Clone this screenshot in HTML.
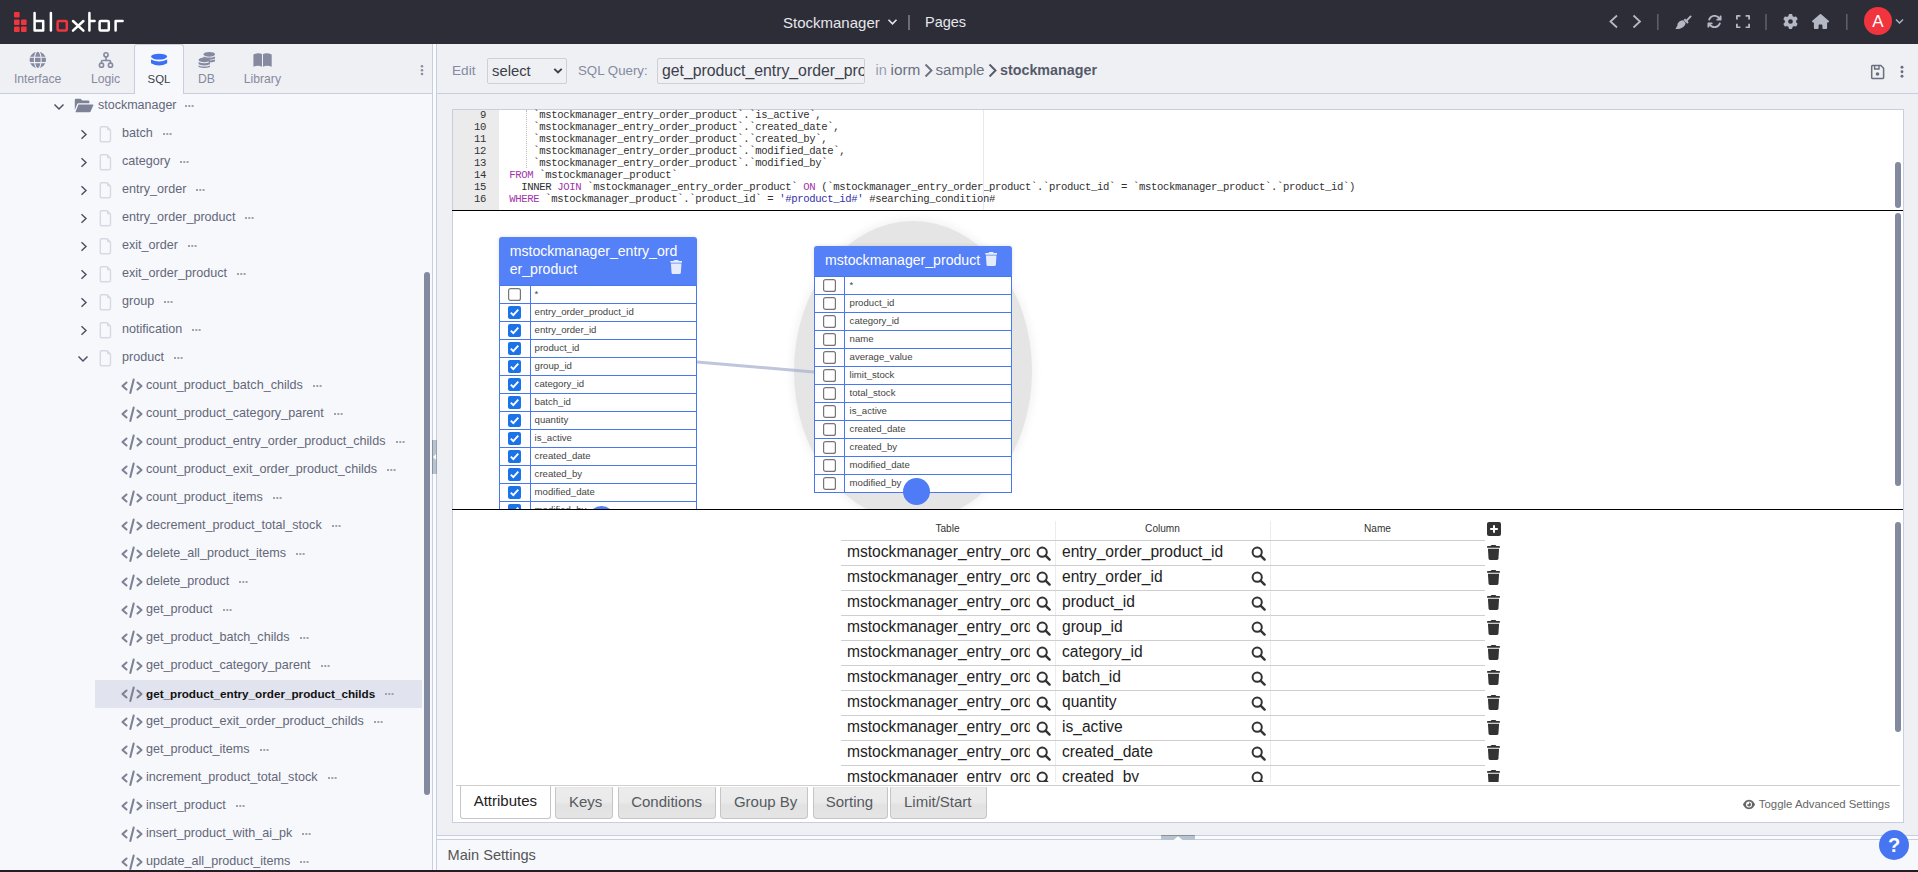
<!DOCTYPE html>
<html><head><meta charset="utf-8">
<style>
*{box-sizing:border-box;margin:0;padding:0}
html,body{width:1918px;height:872px;overflow:hidden;background:#eff0f4;font-family:"Liberation Sans",sans-serif;}
.abs{position:absolute}
.t{position:absolute;white-space:pre;line-height:1}
</style></head><body>

<div class="abs" style="left:0;top:0;width:1918px;height:44px;background:#2d2d37"></div>
<svg class="abs" style="left:0;top:0" width="140" height="44" viewBox="0 0 140 44">
<g fill="#f0353f">
<rect x="14" y="12" width="5.6" height="5.4" rx="1"/>
<rect x="14" y="19.6" width="5.6" height="5.4" rx="1"/>
<rect x="21" y="19.6" width="5.6" height="5.4" rx="1"/>
<rect x="14" y="26.6" width="5.6" height="5.4" rx="1"/>
<rect x="21" y="26.6" width="5.6" height="5.4" rx="1"/>
</g>
<g fill="none" stroke="#fff" stroke-width="2.5" stroke-linecap="round" stroke-linejoin="round">
<path d="M34.6 13 V30.6 H43.2 V21 H34.6"/>
<path d="M50.9 13 V30.6"/>
<path d="M73 21 L83.4 30.6 M83.4 21 L73 30.6"/>
<path d="M89.4 13 V30.6 M89.4 21 H94.6"/>
<rect x="99.6" y="21" width="9.2" height="9.6" rx="1.2"/>
<path d="M115.6 30.6 V21 H122.6"/>
</g>
<rect x="57.6" y="21" width="9.2" height="9.6" rx="1.2" fill="none" stroke="#f0353f" stroke-width="2.5"/>
</svg>
<div class="t" style="left:783px;top:15px;font-size:15px;color:#e6e7ec">Stockmanager</div>
<svg class="abs" style="left:887px;top:18px" width="11" height="8" viewBox="0 0 11 8"><path d="M1.5 1.8 L5.5 5.8 L9.5 1.8" fill="none" stroke="#e6e7ec" stroke-width="1.6"/></svg>
<div class="abs" style="left:908px;top:15px;width:1.5px;height:15px;background:#6a6c78"></div>
<div class="t" style="left:925px;top:15px;font-size:14.5px;color:#e6e7ec">Pages</div>
<svg class="abs" style="left:1600px;top:0" width="318" height="44" viewBox="1600 0 318 44">
<path d="M1617 15.5 L1610.5 21.5 L1617 27.5" fill="none" stroke="#b4b7c4" stroke-width="1.8"/>
<path d="M1633.5 15.5 L1640 21.5 L1633.5 27.5" fill="none" stroke="#b4b7c4" stroke-width="1.8"/>
<rect x="1657" y="14" width="1.6" height="16" fill="#5c5e6a"/>
<path d="M1686.4 20.8 L1690.6 16.4" stroke="#b4b7c4" stroke-width="1.9" stroke-linecap="round"/>
<path d="M1684.3 19.3 L1688 23" stroke="#b4b7c4" stroke-width="2"/>
<path d="M1675.4 29.1 C1676.6 27.3 1677.2 25.8 1677.9 24.8 L1677.1 24.5 C1678.4 21.8 1680.8 20.3 1683.2 20.3 L1685.6 22.7 C1685.3 26.3 1682 29.2 1675.4 29.1 Z" fill="#b4b7c4"/>
<rect x="1765.2" y="14" width="1.6" height="16" fill="#5c5e6a"/>
<rect x="1846" y="14" width="1.6" height="16" fill="#5c5e6a"/>
</svg>
<svg class="abs" style="left:1706.5px;top:14px" width="15" height="15" viewBox="0 0 512 512"><path fill="#b4b7c4" d="M105.1 202.6c7.7-21.8 20.2-42.3 37.8-59.8c62.5-62.5 163.8-62.5 226.3 0L386.3 160H352c-17.7 0-32 14.3-32 32s14.3 32 32 32H463.5c0 0 0 0 0 0h.4c17.7 0 32-14.3 32-32V80c0-17.7-14.3-32-32-32s-32 14.3-32 32v35.2L414.4 97.6c-87.5-87.5-229.3-87.5-316.8 0C73.2 122 55.6 150.7 44.8 181.4c-5.9 16.7 2.9 34.9 19.5 40.8s34.9-2.9 40.8-19.5zM39 289.3c-5 1.5-9.8 4.2-13.7 8.2c-4 4-6.7 8.8-8.1 14c-.3 1.2-.6 2.5-.8 3.8c-.3 1.7-.4 3.4-.4 5.1V432c0 17.7 14.3 32 32 32s32-14.3 32-32V396.9l17.6 17.5 0 0c87.5 87.4 229.3 87.4 316.7 0c24.4-24.4 42.1-53.1 52.9-83.7c5.9-16.7-2.9-34.9-19.5-40.8s-34.9 2.9-40.8 19.5c-7.7 21.8-20.2 42.3-37.8 59.8c-62.5 62.5-163.8 62.5-226.3 0l-.1-.1L125.6 352H160c17.7 0 32-14.3 32-32s-14.3-32-32-32H48.4c-1.6 0-3.2 .1-4.8 .3s-3.1 .5-4.6 1z"/></svg>
<svg class="abs" style="left:1736px;top:14.8px" width="14" height="13.2" viewBox="0 0 14 13.2"><path d="M0.9 4.4 V0.9 H4.4 M9.6 0.9 H13.1 V4.4 M13.1 8.8 V12.3 H9.6 M4.4 12.3 H0.9 V8.8" fill="none" stroke="#b4b7c4" stroke-width="1.8" stroke-linejoin="round"/></svg>
<svg class="abs" style="left:1782.5px;top:13.8px" width="15" height="15" viewBox="0 0 512 512"><path fill="#b4b7c4" d="M495.9 166.6c3.2 8.7 .5 18.4-6.4 24.6l-43.3 39.4c1.1 8.3 1.7 16.8 1.7 25.4s-.6 17.1-1.7 25.4l43.3 39.4c6.9 6.2 9.6 15.9 6.4 24.6c-4.4 11.9-9.7 23.3-15.8 34.3l-4.7 8.1c-6.6 11-14 21.4-22.1 31.2c-5.9 7.2-15.7 9.6-24.5 6.8l-55.7-17.7c-13.4 10.3-28.2 18.9-44 25.4l-12.5 57.1c-2 9.1-9 16.3-18.2 17.8c-13.8 2.3-28 3.5-42.5 3.5s-28.7-1.2-42.5-3.5c-9.2-1.5-16.2-8.7-18.2-17.8l-12.5-57.1c-15.8-6.5-30.6-15.1-44-25.4L83.1 425.9c-8.8 2.8-18.6 .3-24.5-6.8c-8.1-9.8-15.5-20.2-22.1-31.2l-4.7-8.1c-6.1-11-11.4-22.4-15.8-34.3c-3.2-8.7-.5-18.4 6.4-24.6l43.3-39.4C64.6 273.1 64 264.6 64 256s.6-17.1 1.7-25.4L22.4 191.2c-6.9-6.2-9.6-15.9-6.4-24.6c4.4-11.9 9.7-23.3 15.8-34.3l4.7-8.1c6.6-11 14-21.4 22.1-31.2c5.9-7.2 15.7-9.6 24.5-6.8l55.7 17.7c13.4-10.3 28.2-18.9 44-25.4l12.5-57.1c2-9.1 9-16.3 18.2-17.8C227.3 1.2 241.5 0 256 0s28.7 1.2 42.5 3.5c9.2 1.5 16.2 8.7 18.2 17.8l12.5 57.1c15.8 6.5 30.6 15.1 44 25.4l55.7-17.7c8.8-2.8 18.6-.3 24.5 6.8c8.1 9.8 15.5 20.2 22.1 31.2l4.7 8.1c6.1 11 11.4 22.4 15.8 34.3zM256 336a80 80 0 1 0 0-160 80 80 0 1 0 0 160z"/></svg>
<svg class="abs" style="left:1812.3px;top:13.8px" width="17" height="15.2" viewBox="0 0 576 512"><path fill="#b4b7c4" d="M575.8 255.5c0 18-15 32.1-32 32.1h-32l.7 160.2c0 2.7-.2 5.4-.5 8.1V472c0 22.1-17.9 40-40 40H456c-1.1 0-2.2 0-3.3-.1c-1.4 .1-2.8 .1-4.2 .1H416 392c-22.1 0-40-17.9-40-40V448 384c0-17.7-14.3-32-32-32H256c-17.7 0-32 14.3-32 32v64 24c0 22.1-17.9 40-40 40H160 128.1c-1.5 0-3-.1-4.5-.2c-1.2 .1-2.4 .2-3.6 .2H104c-22.1 0-40-17.9-40-40V360c0-.9 0-1.9 .1-2.8V287.6H32c-18 0-32-14-32-32.1c0-9 3-17 10-24L266.4 8c7-7 15-8 22-8s15 2 21 7L564.8 231.5c8 7 12 15 11 24z"/></svg>
<div class="abs" style="left:1864px;top:7px;width:28px;height:28px;border-radius:50%;background:#f0353f"></div>
<div class="t" style="left:1864px;top:13px;width:28px;text-align:center;font-size:17px;color:#fff">A</div>
<svg class="abs" style="left:1895px;top:18px" width="9" height="7" viewBox="0 0 9 7"><path d="M1 1.5 L4.5 5 L8 1.5" fill="none" stroke="#b4b7c4" stroke-width="1.4"/></svg>
<div class="abs" style="left:0;top:44px;width:432px;height:50px;background:#eff0f4;border-bottom:1px solid #c9cde0"></div>
<div class="abs" style="left:0;top:94px;width:432px;height:778px;background:#f7f8fc"></div>
<div class="abs" style="left:134px;top:44px;width:50px;height:50px;background:#f7f8fc;border:1px solid #c9cde0;border-bottom:none;border-radius:3px 3px 0 0"></div>
<div class="t" style="left:-2.3500000000000014px;width:80px;text-align:center;top:73px;font-size:12.2px;color:#858aa0">Interface</div>
<div class="t" style="left:65.6px;width:80px;text-align:center;top:73px;font-size:12.2px;color:#858aa0">Logic</div>
<div class="t" style="left:119.0px;width:80px;text-align:center;top:73px;font-size:12.2px;color:#3b3d48;font-size:11.4px;top:73.6px">SQL</div>
<div class="t" style="left:166.45px;width:80px;text-align:center;top:73px;font-size:12.2px;color:#858aa0">DB</div>
<div class="t" style="left:222.39999999999998px;width:80px;text-align:center;top:73px;font-size:12.2px;color:#858aa0">Library</div>
<svg class="abs" style="left:0;top:44px" width="300" height="30" viewBox="0 44 300 30">
<g fill="#858aa0">
<circle cx="37.8" cy="59.9" r="8.2"/>
</g>
<g stroke="#eff0f4" stroke-width="1.1" fill="none">
<path d="M29 57.2 H47 M29 62.6 H47"/>
<ellipse cx="37.8" cy="59.9" rx="3.4" ry="8.6"/>
</g>
<g fill="none" stroke="#858aa0" stroke-width="1.6">
<circle cx="106" cy="54.8" r="2.1"/>
<circle cx="101.5" cy="65.2" r="2.1"/>
<circle cx="110.5" cy="65.2" r="2.1"/>
<path d="M106 57 V60.5 M101.5 63 V61.5 Q101.5 60.5 102.5 60.5 H109.5 Q110.5 60.5 110.5 61.5 V63"/>
</g>
<g fill="#3b6ff6">
<ellipse cx="159.1" cy="56.6" rx="8.1" ry="2.9"/>
<path d="M151 59.6 Q159.1 63.6 167.2 59.6 V63.2 Q159.1 68 151 63.2 Z"/>
</g>
<g fill="#858aa0">
<ellipse cx="209.3" cy="54.3" rx="5.7" ry="2.4"/>
<path d="M203.6 56.4 Q209.3 58.8 215 56.4 V58.6 Q209.3 61 203.6 58.6Z"/>
<path d="M208.5 60.4 Q212 60.2 215 59.4 V61.6 Q212 62.6 208.8 62.6Z"/>
<ellipse cx="204.3" cy="59.9" rx="5.7" ry="2.4"/>
<path d="M198.6 62 Q204.3 64.4 210 62 V64.2 Q204.3 66.6 198.6 64.2Z"/>
<path d="M198.6 65.4 Q204.3 67.8 210 65.4 V67 Q204.3 69.2 198.6 67Z"/>
<path d="M253.4 54.5 Q258 52.2 262 54 V66.7 Q258 65 253.4 66.7 Z"/>
<path d="M263 54 Q267 52.2 271.7 54.5 V66.7 Q267 65 263 66.7 Z"/>
</g>
</svg>
<svg class="abs" style="left:417.6px;top:63px" width="8" height="14" viewBox="0 0 8 14"><g fill="#8a8fa3"><circle cx="4" cy="3.3" r="1.3"/><circle cx="4" cy="7.2" r="1.3"/><circle cx="4" cy="11" r="1.3"/></g></svg>
<svg class="abs" style="left:53px;top:102.8px" width="12" height="8" viewBox="0 0 12 8"><path d="M1.5 1.5 L6 6 L10.5 1.5" fill="none" stroke="#4d5162" stroke-width="1.45"/></svg>
<svg class="abs" style="left:74px;top:98px" width="20" height="15" viewBox="0 0 20 15"><path fill="#7d8296" d="M0.8 2 Q0.8 0.8 2 0.8 H6.5 L8.3 2.6 H14.2 Q15.4 2.6 15.4 3.8 V5.2 H4.6 Q3.6 5.2 3.2 6.1 L0.8 12 Z"/><path fill="#7d8296" d="M4.4 6.4 H18.8 Q19.6 6.4 19.3 7.2 L16.6 13.6 Q16.3 14.2 15.6 14.2 H1.4 Z"/></svg>
<div class="t" style="left:98px;top:99.4px;font-size:12.5px;color:#636779;">stockmanager</div>
<svg class="abs" style="left:185px;top:104px" width="11" height="4" viewBox="0 0 11 4"><g fill="#a2a3aa"><rect x="0" y="1" width="2" height="2"/><rect x="3.3" y="1" width="2" height="2"/><rect x="6.6" y="1" width="2" height="2"/></g></svg>
<svg class="abs" style="left:80px;top:128.5px" width="8" height="11" viewBox="0 0 8 11"><path d="M1.5 1.2 L6 5.5 L1.5 9.8" fill="none" stroke="#4d5162" stroke-width="1.45"/></svg>
<svg class="abs" style="left:99px;top:126px" width="13" height="17" viewBox="0 0 13 17"><path d="M1.3 1.9 Q1.3 0.8 2.4 0.8 H8 L11.5 4.3 V14.6 Q11.5 15.7 10.4 15.7 H2.4 Q1.3 15.7 1.3 14.6 Z" fill="none" stroke="#d6d9e3" stroke-width="1.4"/><path d="M8 0.8 V4.3 H11.5 Z" fill="#d6d9e3"/></svg>
<div class="t" style="left:122px;top:127.4px;font-size:12.6px;color:#636779;">batch</div>
<svg class="abs" style="left:80px;top:156.5px" width="8" height="11" viewBox="0 0 8 11"><path d="M1.5 1.2 L6 5.5 L1.5 9.8" fill="none" stroke="#4d5162" stroke-width="1.45"/></svg>
<svg class="abs" style="left:99px;top:154px" width="13" height="17" viewBox="0 0 13 17"><path d="M1.3 1.9 Q1.3 0.8 2.4 0.8 H8 L11.5 4.3 V14.6 Q11.5 15.7 10.4 15.7 H2.4 Q1.3 15.7 1.3 14.6 Z" fill="none" stroke="#d6d9e3" stroke-width="1.4"/><path d="M8 0.8 V4.3 H11.5 Z" fill="#d6d9e3"/></svg>
<div class="t" style="left:122px;top:155.4px;font-size:12.6px;color:#636779;">category</div>
<svg class="abs" style="left:80px;top:184.5px" width="8" height="11" viewBox="0 0 8 11"><path d="M1.5 1.2 L6 5.5 L1.5 9.8" fill="none" stroke="#4d5162" stroke-width="1.45"/></svg>
<svg class="abs" style="left:99px;top:182px" width="13" height="17" viewBox="0 0 13 17"><path d="M1.3 1.9 Q1.3 0.8 2.4 0.8 H8 L11.5 4.3 V14.6 Q11.5 15.7 10.4 15.7 H2.4 Q1.3 15.7 1.3 14.6 Z" fill="none" stroke="#d6d9e3" stroke-width="1.4"/><path d="M8 0.8 V4.3 H11.5 Z" fill="#d6d9e3"/></svg>
<div class="t" style="left:122px;top:183.4px;font-size:12.6px;color:#636779;">entry_order</div>
<svg class="abs" style="left:80px;top:212.5px" width="8" height="11" viewBox="0 0 8 11"><path d="M1.5 1.2 L6 5.5 L1.5 9.8" fill="none" stroke="#4d5162" stroke-width="1.45"/></svg>
<svg class="abs" style="left:99px;top:210px" width="13" height="17" viewBox="0 0 13 17"><path d="M1.3 1.9 Q1.3 0.8 2.4 0.8 H8 L11.5 4.3 V14.6 Q11.5 15.7 10.4 15.7 H2.4 Q1.3 15.7 1.3 14.6 Z" fill="none" stroke="#d6d9e3" stroke-width="1.4"/><path d="M8 0.8 V4.3 H11.5 Z" fill="#d6d9e3"/></svg>
<div class="t" style="left:122px;top:211.4px;font-size:12.6px;color:#636779;">entry_order_product</div>
<svg class="abs" style="left:80px;top:240.5px" width="8" height="11" viewBox="0 0 8 11"><path d="M1.5 1.2 L6 5.5 L1.5 9.8" fill="none" stroke="#4d5162" stroke-width="1.45"/></svg>
<svg class="abs" style="left:99px;top:238px" width="13" height="17" viewBox="0 0 13 17"><path d="M1.3 1.9 Q1.3 0.8 2.4 0.8 H8 L11.5 4.3 V14.6 Q11.5 15.7 10.4 15.7 H2.4 Q1.3 15.7 1.3 14.6 Z" fill="none" stroke="#d6d9e3" stroke-width="1.4"/><path d="M8 0.8 V4.3 H11.5 Z" fill="#d6d9e3"/></svg>
<div class="t" style="left:122px;top:239.4px;font-size:12.6px;color:#636779;">exit_order</div>
<svg class="abs" style="left:80px;top:268.5px" width="8" height="11" viewBox="0 0 8 11"><path d="M1.5 1.2 L6 5.5 L1.5 9.8" fill="none" stroke="#4d5162" stroke-width="1.45"/></svg>
<svg class="abs" style="left:99px;top:266px" width="13" height="17" viewBox="0 0 13 17"><path d="M1.3 1.9 Q1.3 0.8 2.4 0.8 H8 L11.5 4.3 V14.6 Q11.5 15.7 10.4 15.7 H2.4 Q1.3 15.7 1.3 14.6 Z" fill="none" stroke="#d6d9e3" stroke-width="1.4"/><path d="M8 0.8 V4.3 H11.5 Z" fill="#d6d9e3"/></svg>
<div class="t" style="left:122px;top:267.4px;font-size:12.6px;color:#636779;">exit_order_product</div>
<svg class="abs" style="left:80px;top:296.5px" width="8" height="11" viewBox="0 0 8 11"><path d="M1.5 1.2 L6 5.5 L1.5 9.8" fill="none" stroke="#4d5162" stroke-width="1.45"/></svg>
<svg class="abs" style="left:99px;top:294px" width="13" height="17" viewBox="0 0 13 17"><path d="M1.3 1.9 Q1.3 0.8 2.4 0.8 H8 L11.5 4.3 V14.6 Q11.5 15.7 10.4 15.7 H2.4 Q1.3 15.7 1.3 14.6 Z" fill="none" stroke="#d6d9e3" stroke-width="1.4"/><path d="M8 0.8 V4.3 H11.5 Z" fill="#d6d9e3"/></svg>
<div class="t" style="left:122px;top:295.4px;font-size:12.6px;color:#636779;">group</div>
<svg class="abs" style="left:80px;top:324.5px" width="8" height="11" viewBox="0 0 8 11"><path d="M1.5 1.2 L6 5.5 L1.5 9.8" fill="none" stroke="#4d5162" stroke-width="1.45"/></svg>
<svg class="abs" style="left:99px;top:322px" width="13" height="17" viewBox="0 0 13 17"><path d="M1.3 1.9 Q1.3 0.8 2.4 0.8 H8 L11.5 4.3 V14.6 Q11.5 15.7 10.4 15.7 H2.4 Q1.3 15.7 1.3 14.6 Z" fill="none" stroke="#d6d9e3" stroke-width="1.4"/><path d="M8 0.8 V4.3 H11.5 Z" fill="#d6d9e3"/></svg>
<div class="t" style="left:122px;top:323.4px;font-size:12.6px;color:#636779;">notification</div>
<svg class="abs" style="left:162.8234375px;top:132px" width="11" height="4" viewBox="0 0 11 4"><g fill="#a2a3aa"><rect x="0" y="1" width="2" height="2"/><rect x="3.3" y="1" width="2" height="2"/><rect x="6.6" y="1" width="2" height="2"/></g></svg>
<svg class="abs" style="left:180.3265625px;top:160px" width="11" height="4" viewBox="0 0 11 4"><g fill="#a2a3aa"><rect x="0" y="1" width="2" height="2"/><rect x="3.3" y="1" width="2" height="2"/><rect x="6.6" y="1" width="2" height="2"/></g></svg>
<svg class="abs" style="left:196.4328125px;top:188px" width="11" height="4" viewBox="0 0 11 4"><g fill="#a2a3aa"><rect x="0" y="1" width="2" height="2"/><rect x="3.3" y="1" width="2" height="2"/><rect x="6.6" y="1" width="2" height="2"/></g></svg>
<svg class="abs" style="left:245.46718750000002px;top:216px" width="11" height="4" viewBox="0 0 11 4"><g fill="#a2a3aa"><rect x="0" y="1" width="2" height="2"/><rect x="3.3" y="1" width="2" height="2"/><rect x="6.6" y="1" width="2" height="2"/></g></svg>
<svg class="abs" style="left:188.0296875px;top:244px" width="11" height="4" viewBox="0 0 11 4"><g fill="#a2a3aa"><rect x="0" y="1" width="2" height="2"/><rect x="3.3" y="1" width="2" height="2"/><rect x="6.6" y="1" width="2" height="2"/></g></svg>
<svg class="abs" style="left:237.06406249999998px;top:272px" width="11" height="4" viewBox="0 0 11 4"><g fill="#a2a3aa"><rect x="0" y="1" width="2" height="2"/><rect x="3.3" y="1" width="2" height="2"/><rect x="6.6" y="1" width="2" height="2"/></g></svg>
<svg class="abs" style="left:164.2265625px;top:300px" width="11" height="4" viewBox="0 0 11 4"><g fill="#a2a3aa"><rect x="0" y="1" width="2" height="2"/><rect x="3.3" y="1" width="2" height="2"/><rect x="6.6" y="1" width="2" height="2"/></g></svg>
<svg class="abs" style="left:192.2390625px;top:328px" width="11" height="4" viewBox="0 0 11 4"><g fill="#a2a3aa"><rect x="0" y="1" width="2" height="2"/><rect x="3.3" y="1" width="2" height="2"/><rect x="6.6" y="1" width="2" height="2"/></g></svg>
<svg class="abs" style="left:77px;top:354.8px" width="12" height="8" viewBox="0 0 12 8"><path d="M1.5 1.5 L6 6 L10.5 1.5" fill="none" stroke="#4d5162" stroke-width="1.45"/></svg>
<svg class="abs" style="left:99px;top:350px" width="13" height="17" viewBox="0 0 13 17"><path d="M1.3 1.9 Q1.3 0.8 2.4 0.8 H8 L11.5 4.3 V14.6 Q11.5 15.7 10.4 15.7 H2.4 Q1.3 15.7 1.3 14.6 Z" fill="none" stroke="#d6d9e3" stroke-width="1.4"/><path d="M8 0.8 V4.3 H11.5 Z" fill="#d6d9e3"/></svg>
<div class="t" style="left:122px;top:351.4px;font-size:12.6px;color:#636779;">product</div>
<svg class="abs" style="left:174.0265625px;top:356px" width="11" height="4" viewBox="0 0 11 4"><g fill="#a2a3aa"><rect x="0" y="1" width="2" height="2"/><rect x="3.3" y="1" width="2" height="2"/><rect x="6.6" y="1" width="2" height="2"/></g></svg>
<svg class="abs" style="left:121px;top:377.7px" width="22" height="17" viewBox="0 0 22 17"><g fill="none" stroke="#7d8296" stroke-width="2.1" stroke-linecap="round" stroke-linejoin="round"><path d="M5.5 4.5 L1.5 8 L5.5 11.5"/><path d="M16.5 4.5 L20.5 8 L16.5 11.5"/><path d="M12.7 1.6 L9.3 14.9"/></g></svg>
<div class="t" style="left:146px;top:379.4px;font-size:12.6px;color:#636779;">count_product_batch_childs</div>
<svg class="abs" style="left:312.9125px;top:384px" width="11" height="4" viewBox="0 0 11 4"><g fill="#a2a3aa"><rect x="0" y="1" width="2" height="2"/><rect x="3.3" y="1" width="2" height="2"/><rect x="6.6" y="1" width="2" height="2"/></g></svg>
<svg class="abs" style="left:121px;top:405.7px" width="22" height="17" viewBox="0 0 22 17"><g fill="none" stroke="#7d8296" stroke-width="2.1" stroke-linecap="round" stroke-linejoin="round"><path d="M5.5 4.5 L1.5 8 L5.5 11.5"/><path d="M16.5 4.5 L20.5 8 L16.5 11.5"/><path d="M12.7 1.6 L9.3 14.9"/></g></svg>
<div class="t" style="left:146px;top:407.4px;font-size:12.6px;color:#636779;">count_product_category_parent</div>
<svg class="abs" style="left:333.92656250000005px;top:412px" width="11" height="4" viewBox="0 0 11 4"><g fill="#a2a3aa"><rect x="0" y="1" width="2" height="2"/><rect x="3.3" y="1" width="2" height="2"/><rect x="6.6" y="1" width="2" height="2"/></g></svg>
<svg class="abs" style="left:121px;top:433.7px" width="22" height="17" viewBox="0 0 22 17"><g fill="none" stroke="#7d8296" stroke-width="2.1" stroke-linecap="round" stroke-linejoin="round"><path d="M5.5 4.5 L1.5 8 L5.5 11.5"/><path d="M16.5 4.5 L20.5 8 L16.5 11.5"/><path d="M12.7 1.6 L9.3 14.9"/></g></svg>
<div class="t" style="left:146px;top:435.4px;font-size:12.6px;color:#636779;">count_product_entry_order_product_childs</div>
<svg class="abs" style="left:395.55625px;top:440px" width="11" height="4" viewBox="0 0 11 4"><g fill="#a2a3aa"><rect x="0" y="1" width="2" height="2"/><rect x="3.3" y="1" width="2" height="2"/><rect x="6.6" y="1" width="2" height="2"/></g></svg>
<svg class="abs" style="left:121px;top:461.7px" width="22" height="17" viewBox="0 0 22 17"><g fill="none" stroke="#7d8296" stroke-width="2.1" stroke-linecap="round" stroke-linejoin="round"><path d="M5.5 4.5 L1.5 8 L5.5 11.5"/><path d="M16.5 4.5 L20.5 8 L16.5 11.5"/><path d="M12.7 1.6 L9.3 14.9"/></g></svg>
<div class="t" style="left:146px;top:463.4px;font-size:12.6px;color:#636779;">count_product_exit_order_product_childs</div>
<svg class="abs" style="left:387.15312500000005px;top:468px" width="11" height="4" viewBox="0 0 11 4"><g fill="#a2a3aa"><rect x="0" y="1" width="2" height="2"/><rect x="3.3" y="1" width="2" height="2"/><rect x="6.6" y="1" width="2" height="2"/></g></svg>
<svg class="abs" style="left:121px;top:489.7px" width="22" height="17" viewBox="0 0 22 17"><g fill="none" stroke="#7d8296" stroke-width="2.1" stroke-linecap="round" stroke-linejoin="round"><path d="M5.5 4.5 L1.5 8 L5.5 11.5"/><path d="M16.5 4.5 L20.5 8 L16.5 11.5"/><path d="M12.7 1.6 L9.3 14.9"/></g></svg>
<div class="t" style="left:146px;top:491.4px;font-size:12.6px;color:#636779;">count_product_items</div>
<svg class="abs" style="left:272.96875px;top:496px" width="11" height="4" viewBox="0 0 11 4"><g fill="#a2a3aa"><rect x="0" y="1" width="2" height="2"/><rect x="3.3" y="1" width="2" height="2"/><rect x="6.6" y="1" width="2" height="2"/></g></svg>
<svg class="abs" style="left:121px;top:517.7px" width="22" height="17" viewBox="0 0 22 17"><g fill="none" stroke="#7d8296" stroke-width="2.1" stroke-linecap="round" stroke-linejoin="round"><path d="M5.5 4.5 L1.5 8 L5.5 11.5"/><path d="M16.5 4.5 L20.5 8 L16.5 11.5"/><path d="M12.7 1.6 L9.3 14.9"/></g></svg>
<div class="t" style="left:146px;top:519.4px;font-size:12.6px;color:#636779;">decrement_product_total_stock</div>
<svg class="abs" style="left:331.803125px;top:524px" width="11" height="4" viewBox="0 0 11 4"><g fill="#a2a3aa"><rect x="0" y="1" width="2" height="2"/><rect x="3.3" y="1" width="2" height="2"/><rect x="6.6" y="1" width="2" height="2"/></g></svg>
<svg class="abs" style="left:121px;top:545.7px" width="22" height="17" viewBox="0 0 22 17"><g fill="none" stroke="#7d8296" stroke-width="2.1" stroke-linecap="round" stroke-linejoin="round"><path d="M5.5 4.5 L1.5 8 L5.5 11.5"/><path d="M16.5 4.5 L20.5 8 L16.5 11.5"/><path d="M12.7 1.6 L9.3 14.9"/></g></svg>
<div class="t" style="left:146px;top:547.4px;font-size:12.6px;color:#636779;">delete_all_product_items</div>
<svg class="abs" style="left:296.0921875px;top:552px" width="11" height="4" viewBox="0 0 11 4"><g fill="#a2a3aa"><rect x="0" y="1" width="2" height="2"/><rect x="3.3" y="1" width="2" height="2"/><rect x="6.6" y="1" width="2" height="2"/></g></svg>
<svg class="abs" style="left:121px;top:573.7px" width="22" height="17" viewBox="0 0 22 17"><g fill="none" stroke="#7d8296" stroke-width="2.1" stroke-linecap="round" stroke-linejoin="round"><path d="M5.5 4.5 L1.5 8 L5.5 11.5"/><path d="M16.5 4.5 L20.5 8 L16.5 11.5"/><path d="M12.7 1.6 L9.3 14.9"/></g></svg>
<div class="t" style="left:146px;top:575.4px;font-size:12.6px;color:#636779;">delete_product</div>
<svg class="abs" style="left:239.36562500000002px;top:580px" width="11" height="4" viewBox="0 0 11 4"><g fill="#a2a3aa"><rect x="0" y="1" width="2" height="2"/><rect x="3.3" y="1" width="2" height="2"/><rect x="6.6" y="1" width="2" height="2"/></g></svg>
<svg class="abs" style="left:121px;top:601.7px" width="22" height="17" viewBox="0 0 22 17"><g fill="none" stroke="#7d8296" stroke-width="2.1" stroke-linecap="round" stroke-linejoin="round"><path d="M5.5 4.5 L1.5 8 L5.5 11.5"/><path d="M16.5 4.5 L20.5 8 L16.5 11.5"/><path d="M12.7 1.6 L9.3 14.9"/></g></svg>
<div class="t" style="left:146px;top:603.4px;font-size:12.6px;color:#636779;">get_product</div>
<svg class="abs" style="left:222.55px;top:608px" width="11" height="4" viewBox="0 0 11 4"><g fill="#a2a3aa"><rect x="0" y="1" width="2" height="2"/><rect x="3.3" y="1" width="2" height="2"/><rect x="6.6" y="1" width="2" height="2"/></g></svg>
<svg class="abs" style="left:121px;top:629.7px" width="22" height="17" viewBox="0 0 22 17"><g fill="none" stroke="#7d8296" stroke-width="2.1" stroke-linecap="round" stroke-linejoin="round"><path d="M5.5 4.5 L1.5 8 L5.5 11.5"/><path d="M16.5 4.5 L20.5 8 L16.5 11.5"/><path d="M12.7 1.6 L9.3 14.9"/></g></svg>
<div class="t" style="left:146px;top:631.4px;font-size:12.6px;color:#636779;">get_product_batch_childs</div>
<svg class="abs" style="left:299.60468749999995px;top:636px" width="11" height="4" viewBox="0 0 11 4"><g fill="#a2a3aa"><rect x="0" y="1" width="2" height="2"/><rect x="3.3" y="1" width="2" height="2"/><rect x="6.6" y="1" width="2" height="2"/></g></svg>
<svg class="abs" style="left:121px;top:657.7px" width="22" height="17" viewBox="0 0 22 17"><g fill="none" stroke="#7d8296" stroke-width="2.1" stroke-linecap="round" stroke-linejoin="round"><path d="M5.5 4.5 L1.5 8 L5.5 11.5"/><path d="M16.5 4.5 L20.5 8 L16.5 11.5"/><path d="M12.7 1.6 L9.3 14.9"/></g></svg>
<div class="t" style="left:146px;top:659.4px;font-size:12.6px;color:#636779;">get_product_category_parent</div>
<svg class="abs" style="left:320.61875px;top:664px" width="11" height="4" viewBox="0 0 11 4"><g fill="#a2a3aa"><rect x="0" y="1" width="2" height="2"/><rect x="3.3" y="1" width="2" height="2"/><rect x="6.6" y="1" width="2" height="2"/></g></svg>
<div class="abs" style="left:95px;top:680px;width:327px;height:28px;background:#e1e3ee"></div>
<svg class="abs" style="left:121px;top:685.7px" width="22" height="17" viewBox="0 0 22 17"><g fill="none" stroke="#7d8296" stroke-width="2.1" stroke-linecap="round" stroke-linejoin="round"><path d="M5.5 4.5 L1.5 8 L5.5 11.5"/><path d="M16.5 4.5 L20.5 8 L16.5 11.5"/><path d="M12.7 1.6 L9.3 14.9"/></g></svg>
<div class="t" style="left:146px;top:687.9px;font-size:11.7px;color:#111;font-weight:700;">get_product_entry_order_product_childs</div>
<svg class="abs" style="left:385.493671875px;top:692px" width="11" height="4" viewBox="0 0 11 4"><g fill="#a2a3aa"><rect x="0" y="1" width="2" height="2"/><rect x="3.3" y="1" width="2" height="2"/><rect x="6.6" y="1" width="2" height="2"/></g></svg>
<svg class="abs" style="left:121px;top:713.7px" width="22" height="17" viewBox="0 0 22 17"><g fill="none" stroke="#7d8296" stroke-width="2.1" stroke-linecap="round" stroke-linejoin="round"><path d="M5.5 4.5 L1.5 8 L5.5 11.5"/><path d="M16.5 4.5 L20.5 8 L16.5 11.5"/><path d="M12.7 1.6 L9.3 14.9"/></g></svg>
<div class="t" style="left:146px;top:715.4px;font-size:12.6px;color:#636779;">get_product_exit_order_product_childs</div>
<svg class="abs" style="left:373.8453125px;top:720px" width="11" height="4" viewBox="0 0 11 4"><g fill="#a2a3aa"><rect x="0" y="1" width="2" height="2"/><rect x="3.3" y="1" width="2" height="2"/><rect x="6.6" y="1" width="2" height="2"/></g></svg>
<svg class="abs" style="left:121px;top:741.7px" width="22" height="17" viewBox="0 0 22 17"><g fill="none" stroke="#7d8296" stroke-width="2.1" stroke-linecap="round" stroke-linejoin="round"><path d="M5.5 4.5 L1.5 8 L5.5 11.5"/><path d="M16.5 4.5 L20.5 8 L16.5 11.5"/><path d="M12.7 1.6 L9.3 14.9"/></g></svg>
<div class="t" style="left:146px;top:743.4px;font-size:12.6px;color:#636779;">get_product_items</div>
<svg class="abs" style="left:259.6609375px;top:748px" width="11" height="4" viewBox="0 0 11 4"><g fill="#a2a3aa"><rect x="0" y="1" width="2" height="2"/><rect x="3.3" y="1" width="2" height="2"/><rect x="6.6" y="1" width="2" height="2"/></g></svg>
<svg class="abs" style="left:121px;top:769.7px" width="22" height="17" viewBox="0 0 22 17"><g fill="none" stroke="#7d8296" stroke-width="2.1" stroke-linecap="round" stroke-linejoin="round"><path d="M5.5 4.5 L1.5 8 L5.5 11.5"/><path d="M16.5 4.5 L20.5 8 L16.5 11.5"/><path d="M12.7 1.6 L9.3 14.9"/></g></svg>
<div class="t" style="left:146px;top:771.4px;font-size:12.6px;color:#636779;">increment_product_total_stock</div>
<svg class="abs" style="left:327.5953125px;top:776px" width="11" height="4" viewBox="0 0 11 4"><g fill="#a2a3aa"><rect x="0" y="1" width="2" height="2"/><rect x="3.3" y="1" width="2" height="2"/><rect x="6.6" y="1" width="2" height="2"/></g></svg>
<svg class="abs" style="left:121px;top:797.7px" width="22" height="17" viewBox="0 0 22 17"><g fill="none" stroke="#7d8296" stroke-width="2.1" stroke-linecap="round" stroke-linejoin="round"><path d="M5.5 4.5 L1.5 8 L5.5 11.5"/><path d="M16.5 4.5 L20.5 8 L16.5 11.5"/><path d="M12.7 1.6 L9.3 14.9"/></g></svg>
<div class="t" style="left:146px;top:799.4px;font-size:12.6px;color:#636779;">insert_product</div>
<svg class="abs" style="left:235.84531249999998px;top:804px" width="11" height="4" viewBox="0 0 11 4"><g fill="#a2a3aa"><rect x="0" y="1" width="2" height="2"/><rect x="3.3" y="1" width="2" height="2"/><rect x="6.6" y="1" width="2" height="2"/></g></svg>
<svg class="abs" style="left:121px;top:825.7px" width="22" height="17" viewBox="0 0 22 17"><g fill="none" stroke="#7d8296" stroke-width="2.1" stroke-linecap="round" stroke-linejoin="round"><path d="M5.5 4.5 L1.5 8 L5.5 11.5"/><path d="M16.5 4.5 L20.5 8 L16.5 11.5"/><path d="M12.7 1.6 L9.3 14.9"/></g></svg>
<div class="t" style="left:146px;top:827.4px;font-size:12.6px;color:#636779;">insert_product_with_ai_pk</div>
<svg class="abs" style="left:302.3921875px;top:832px" width="11" height="4" viewBox="0 0 11 4"><g fill="#a2a3aa"><rect x="0" y="1" width="2" height="2"/><rect x="3.3" y="1" width="2" height="2"/><rect x="6.6" y="1" width="2" height="2"/></g></svg>
<svg class="abs" style="left:121px;top:853.7px" width="22" height="17" viewBox="0 0 22 17"><g fill="none" stroke="#7d8296" stroke-width="2.1" stroke-linecap="round" stroke-linejoin="round"><path d="M5.5 4.5 L1.5 8 L5.5 11.5"/><path d="M16.5 4.5 L20.5 8 L16.5 11.5"/><path d="M12.7 1.6 L9.3 14.9"/></g></svg>
<div class="t" style="left:146px;top:855.4px;font-size:12.6px;color:#636779;">update_all_product_items</div>
<svg class="abs" style="left:300.29999999999995px;top:860px" width="11" height="4" viewBox="0 0 11 4"><g fill="#a2a3aa"><rect x="0" y="1" width="2" height="2"/><rect x="3.3" y="1" width="2" height="2"/><rect x="6.6" y="1" width="2" height="2"/></g></svg>
<div class="abs" style="left:424px;top:272px;width:6px;height:523px;border-radius:3px;background:#838aa0"></div>
<div class="abs" style="left:432px;top:44px;width:5px;height:828px;background:#fafbfe;border-left:1px solid #c9cde0;border-right:1px solid #c9cde0"></div>
<div class="abs" style="left:432px;top:440px;width:5px;height:34px;background:#b8c3d1;border-left:1px solid #8a9298;border-right:1px solid #9aa3b0"></div>
<svg class="abs" style="left:433px;top:454px" width="3" height="6" viewBox="0 0 3 6"><path d="M3 0 L0 3 L3 6Z" fill="#fff"/></svg>
<div class="abs" style="left:437px;top:93px;width:1481px;height:1px;background:#c9cde0"></div>
<div class="t" style="left:452px;top:63.8px;font-size:13.6px;color:#858aa0">Edit</div>
<div class="abs" style="left:487px;top:58px;width:80px;height:26px;border:1px solid #cfd0d6;border-radius:2px"></div>
<div class="t" style="left:492px;top:64px;font-size:14.8px;color:#3c3e4a">select</div>
<svg class="abs" style="left:553px;top:67px" width="10" height="8" viewBox="0 0 10 8"><path d="M1.3 1.8 L5 5.5 L8.7 1.8" fill="none" stroke="#3c3e4a" stroke-width="1.9"/></svg>
<div class="t" style="left:578px;top:63.8px;font-size:13.3px;color:#858aa0">SQL Query:</div>
<div class="abs" style="left:657px;top:58px;width:208px;height:26px;border:1px solid #cfd0d6;border-radius:2px;overflow:hidden"><div class="t" style="left:4px;top:3.5px;font-size:15.8px;color:#3c3e4a">get_product_entry_order_product_childs</div></div>
<div class="t" style="left:875.5px;top:63px;font-size:14.5px;color:#9a9eb0">in</div>
<div class="t" style="left:890.5px;top:62px;font-size:15.4px;color:#6c7080">iorm</div>
<svg class="abs" style="left:923px;top:63px" width="11" height="15" viewBox="0 0 11 15"><path d="M2.5 1.5 L8.5 7.5 L2.5 13.5" fill="none" stroke="#6c7080" stroke-width="1.9"/></svg>
<div class="t" style="left:935.5px;top:62px;font-size:15.2px;color:#6c7080">sample</div>
<svg class="abs" style="left:987px;top:63px" width="11" height="15" viewBox="0 0 11 15"><path d="M2.5 1.5 L8.5 7.5 L2.5 13.5" fill="none" stroke="#555a6a" stroke-width="1.9"/></svg>
<div class="t" style="left:1000px;top:62.8px;font-size:14.3px;font-weight:700;color:#555a6a">stockmanager</div>
<svg class="abs" style="left:1869px;top:63px" width="17" height="17" viewBox="0 0 17 17"><path d="M2.7 3.2 Q2.7 2.5 3.4 2.5 H11.8 L14.6 5.3 V14.8 Q14.6 15.5 13.9 15.5 H3.4 Q2.7 15.5 2.7 14.8 Z" fill="none" stroke="#6b6e7d" stroke-width="1.5"/><path d="M5.6 2.8 V6 H10 V2.8" fill="none" stroke="#6b6e7d" stroke-width="1.4"/><circle cx="8.5" cy="11" r="1.8" fill="#6b6e7d"/></svg>
<svg class="abs" style="left:1898.4px;top:64px" width="8" height="16" viewBox="0 0 8 16"><g fill="#6b6e7d"><circle cx="4" cy="3.2" r="1.45"/><circle cx="4" cy="7.7" r="1.45"/><circle cx="4" cy="12.3" r="1.45"/></g></svg>
<div class="abs" style="left:452px;top:109px;width:1452px;height:714px;background:#fff;border:1px solid #c9cde0"></div>
<div class="abs" style="left:453px;top:110px;width:46px;height:100px;background:#ebebeb"></div>
<style>.code{font-family:"Liberation Mono",monospace;font-size:10.6px;letter-spacing:-0.36px;line-height:12px;color:#303030;white-space:pre}.code k{color:#9f35a8}.code s{text-decoration:none;color:#3430a8}</style>
<div class="abs code" style="left:453px;top:109.2px;width:33px;text-align:right;color:#333">9</div>
<div class="abs code" style="left:509.3px;top:109.2px">    `mstockmanager_entry_order_product`.`is_active`,</div>
<div class="abs code" style="left:453px;top:121.2px;width:33px;text-align:right;color:#333">10</div>
<div class="abs code" style="left:509.3px;top:121.2px">    `mstockmanager_entry_order_product`.`created_date`,</div>
<div class="abs code" style="left:453px;top:133.2px;width:33px;text-align:right;color:#333">11</div>
<div class="abs code" style="left:509.3px;top:133.2px">    `mstockmanager_entry_order_product`.`created_by`,</div>
<div class="abs code" style="left:453px;top:145.2px;width:33px;text-align:right;color:#333">12</div>
<div class="abs code" style="left:509.3px;top:145.2px">    `mstockmanager_entry_order_product`.`modified_date`,</div>
<div class="abs code" style="left:453px;top:157.2px;width:33px;text-align:right;color:#333">13</div>
<div class="abs code" style="left:509.3px;top:157.2px">    `mstockmanager_entry_order_product`.`modified_by`</div>
<div class="abs code" style="left:453px;top:169.2px;width:33px;text-align:right;color:#333">14</div>
<div class="abs code" style="left:509.3px;top:169.2px"><k>FROM</k> `mstockmanager_product`</div>
<div class="abs code" style="left:453px;top:181.2px;width:33px;text-align:right;color:#333">15</div>
<div class="abs code" style="left:509.3px;top:181.2px">  INNER <k>JOIN</k> `mstockmanager_entry_order_product` <k>ON</k> (`mstockmanager_entry_order_product`.`product_id` = `mstockmanager_product`.`product_id`)</div>
<div class="abs code" style="left:453px;top:193.2px;width:33px;text-align:right;color:#333">16</div>
<div class="abs code" style="left:509.3px;top:193.2px"><k>WHERE</k> `mstockmanager_product`.`product_id` = <s>'#product_id#'</s> #searching_condition#</div>
<div class="abs" style="left:526px;top:110px;width:0;height:58px;border-left:1px dotted #bbb"></div>
<div class="abs" style="left:983px;top:110px;width:1px;height:100px;background:#e8e8e8"></div>
<div class="abs" style="left:1895px;top:162px;width:6px;height:46px;border-radius:3px;background:#838aa0"></div>
<div class="abs" style="left:452px;top:210px;width:1451px;height:1px;background:#000"></div>
<div class="abs" style="left:452px;top:509px;width:1451px;height:1px;background:#000"></div>
<div class="abs" style="left:1895px;top:213px;width:6px;height:273px;border-radius:3px;background:#838aa0"></div>
<div class="abs" style="left:453px;top:212px;width:1440px;height:297px;overflow:hidden">
<div class="abs" style="left:341px;top:9px;width:238px;height:300px;border-radius:50%;background:#e5e5e5;box-shadow:0 0 10px 2px rgba(0,0,0,0.06)"></div>
<svg class="abs" style="left:0;top:0" width="1440" height="297" viewBox="453 212 1440 297"><path d="M697 362 L814 372" stroke="#a9b3cf" stroke-opacity="0.75" stroke-width="3"/></svg>
<div class="abs" style="left:46px;top:25px;width:198px;height:48px;background:#5581f8;border-radius:3px 3px 0 0;box-shadow:0 0 4px rgba(0,0,0,0.12)"></div>
<div class="t" style="left:56.69999999999999px;top:31.7px;font-size:14.1px;color:#fff">mstockmanager_entry_ord</div>
<div class="t" style="left:56.69999999999999px;top:49.7px;font-size:14.1px;color:#fff">er_product</div>
<svg class="abs" style="left:216.8px;top:48.4px" width="12.4" height="14" viewBox="0 0 448 512"><path fill="#e6ebfb" d="M135.2 17.7L128 32H32C14.3 32 0 46.3 0 64S14.3 96 32 96H416c17.7 0 32-14.3 32-32s-14.3-32-32-32H320l-7.2-14.3C307.4 6.8 296.3 0 284.2 0H163.8c-12.1 0-23.2 6.8-28.6 17.7zM416 128H32L53.2 467c1.6 25.3 22.6 45 47.9 45H346.9c25.3 0 46.3-19.7 47.9-45L416 128z"/></svg>
<div class="abs" style="left:46px;top:73px;width:198px;height:19px;background:#fff;border:1px solid #4a76f0"></div>
<div class="abs" style="left:77px;top:73px;width:1px;height:19px;background:#4a76f0"></div>
<svg class="abs" style="left:55px;top:76px" width="13" height="13" viewBox="0 0 13 13"><rect x="0.6" y="0.6" width="11.8" height="11.8" rx="2" fill="#fff" stroke="#767676" stroke-width="1.2"/></svg>
<div class="t" style="left:81.60000000000002px;top:76.8px;font-size:9.6px;color:#444">*</div>
<div class="abs" style="left:46px;top:91px;width:198px;height:19px;background:#fff;border:1px solid #4a76f0"></div>
<div class="abs" style="left:77px;top:91px;width:1px;height:19px;background:#4a76f0"></div>
<svg class="abs" style="left:55px;top:94px" width="13" height="13" viewBox="0 0 13 13"><rect x="0" y="0" width="13" height="13" rx="2" fill="#1a73e8"/><path d="M2.8 6.6 L5.3 9.2 L10.3 3.6" fill="none" stroke="#fff" stroke-width="1.9"/></svg>
<div class="t" style="left:81.60000000000002px;top:94.8px;font-size:9.6px;color:#444">entry_order_product_id</div>
<div class="abs" style="left:46px;top:109px;width:198px;height:19px;background:#fff;border:1px solid #4a76f0"></div>
<div class="abs" style="left:77px;top:109px;width:1px;height:19px;background:#4a76f0"></div>
<svg class="abs" style="left:55px;top:112px" width="13" height="13" viewBox="0 0 13 13"><rect x="0" y="0" width="13" height="13" rx="2" fill="#1a73e8"/><path d="M2.8 6.6 L5.3 9.2 L10.3 3.6" fill="none" stroke="#fff" stroke-width="1.9"/></svg>
<div class="t" style="left:81.60000000000002px;top:112.8px;font-size:9.6px;color:#444">entry_order_id</div>
<div class="abs" style="left:46px;top:127px;width:198px;height:19px;background:#fff;border:1px solid #4a76f0"></div>
<div class="abs" style="left:77px;top:127px;width:1px;height:19px;background:#4a76f0"></div>
<svg class="abs" style="left:55px;top:130px" width="13" height="13" viewBox="0 0 13 13"><rect x="0" y="0" width="13" height="13" rx="2" fill="#1a73e8"/><path d="M2.8 6.6 L5.3 9.2 L10.3 3.6" fill="none" stroke="#fff" stroke-width="1.9"/></svg>
<div class="t" style="left:81.60000000000002px;top:130.8px;font-size:9.6px;color:#444">product_id</div>
<div class="abs" style="left:46px;top:145px;width:198px;height:19px;background:#fff;border:1px solid #4a76f0"></div>
<div class="abs" style="left:77px;top:145px;width:1px;height:19px;background:#4a76f0"></div>
<svg class="abs" style="left:55px;top:148px" width="13" height="13" viewBox="0 0 13 13"><rect x="0" y="0" width="13" height="13" rx="2" fill="#1a73e8"/><path d="M2.8 6.6 L5.3 9.2 L10.3 3.6" fill="none" stroke="#fff" stroke-width="1.9"/></svg>
<div class="t" style="left:81.60000000000002px;top:148.8px;font-size:9.6px;color:#444">group_id</div>
<div class="abs" style="left:46px;top:163px;width:198px;height:19px;background:#fff;border:1px solid #4a76f0"></div>
<div class="abs" style="left:77px;top:163px;width:1px;height:19px;background:#4a76f0"></div>
<svg class="abs" style="left:55px;top:166px" width="13" height="13" viewBox="0 0 13 13"><rect x="0" y="0" width="13" height="13" rx="2" fill="#1a73e8"/><path d="M2.8 6.6 L5.3 9.2 L10.3 3.6" fill="none" stroke="#fff" stroke-width="1.9"/></svg>
<div class="t" style="left:81.60000000000002px;top:166.8px;font-size:9.6px;color:#444">category_id</div>
<div class="abs" style="left:46px;top:181px;width:198px;height:19px;background:#fff;border:1px solid #4a76f0"></div>
<div class="abs" style="left:77px;top:181px;width:1px;height:19px;background:#4a76f0"></div>
<svg class="abs" style="left:55px;top:184px" width="13" height="13" viewBox="0 0 13 13"><rect x="0" y="0" width="13" height="13" rx="2" fill="#1a73e8"/><path d="M2.8 6.6 L5.3 9.2 L10.3 3.6" fill="none" stroke="#fff" stroke-width="1.9"/></svg>
<div class="t" style="left:81.60000000000002px;top:184.8px;font-size:9.6px;color:#444">batch_id</div>
<div class="abs" style="left:46px;top:199px;width:198px;height:19px;background:#fff;border:1px solid #4a76f0"></div>
<div class="abs" style="left:77px;top:199px;width:1px;height:19px;background:#4a76f0"></div>
<svg class="abs" style="left:55px;top:202px" width="13" height="13" viewBox="0 0 13 13"><rect x="0" y="0" width="13" height="13" rx="2" fill="#1a73e8"/><path d="M2.8 6.6 L5.3 9.2 L10.3 3.6" fill="none" stroke="#fff" stroke-width="1.9"/></svg>
<div class="t" style="left:81.60000000000002px;top:202.8px;font-size:9.6px;color:#444">quantity</div>
<div class="abs" style="left:46px;top:217px;width:198px;height:19px;background:#fff;border:1px solid #4a76f0"></div>
<div class="abs" style="left:77px;top:217px;width:1px;height:19px;background:#4a76f0"></div>
<svg class="abs" style="left:55px;top:220px" width="13" height="13" viewBox="0 0 13 13"><rect x="0" y="0" width="13" height="13" rx="2" fill="#1a73e8"/><path d="M2.8 6.6 L5.3 9.2 L10.3 3.6" fill="none" stroke="#fff" stroke-width="1.9"/></svg>
<div class="t" style="left:81.60000000000002px;top:220.8px;font-size:9.6px;color:#444">is_active</div>
<div class="abs" style="left:46px;top:235px;width:198px;height:19px;background:#fff;border:1px solid #4a76f0"></div>
<div class="abs" style="left:77px;top:235px;width:1px;height:19px;background:#4a76f0"></div>
<svg class="abs" style="left:55px;top:238px" width="13" height="13" viewBox="0 0 13 13"><rect x="0" y="0" width="13" height="13" rx="2" fill="#1a73e8"/><path d="M2.8 6.6 L5.3 9.2 L10.3 3.6" fill="none" stroke="#fff" stroke-width="1.9"/></svg>
<div class="t" style="left:81.60000000000002px;top:238.8px;font-size:9.6px;color:#444">created_date</div>
<div class="abs" style="left:46px;top:253px;width:198px;height:19px;background:#fff;border:1px solid #4a76f0"></div>
<div class="abs" style="left:77px;top:253px;width:1px;height:19px;background:#4a76f0"></div>
<svg class="abs" style="left:55px;top:256px" width="13" height="13" viewBox="0 0 13 13"><rect x="0" y="0" width="13" height="13" rx="2" fill="#1a73e8"/><path d="M2.8 6.6 L5.3 9.2 L10.3 3.6" fill="none" stroke="#fff" stroke-width="1.9"/></svg>
<div class="t" style="left:81.60000000000002px;top:256.8px;font-size:9.6px;color:#444">created_by</div>
<div class="abs" style="left:46px;top:271px;width:198px;height:19px;background:#fff;border:1px solid #4a76f0"></div>
<div class="abs" style="left:77px;top:271px;width:1px;height:19px;background:#4a76f0"></div>
<svg class="abs" style="left:55px;top:274px" width="13" height="13" viewBox="0 0 13 13"><rect x="0" y="0" width="13" height="13" rx="2" fill="#1a73e8"/><path d="M2.8 6.6 L5.3 9.2 L10.3 3.6" fill="none" stroke="#fff" stroke-width="1.9"/></svg>
<div class="t" style="left:81.60000000000002px;top:274.8px;font-size:9.6px;color:#444">modified_date</div>
<div class="abs" style="left:46px;top:289px;width:198px;height:19px;background:#fff;border:1px solid #4a76f0"></div>
<div class="abs" style="left:77px;top:289px;width:1px;height:19px;background:#4a76f0"></div>
<svg class="abs" style="left:55px;top:292px" width="13" height="13" viewBox="0 0 13 13"><rect x="0" y="0" width="13" height="13" rx="2" fill="#1a73e8"/><path d="M2.8 6.6 L5.3 9.2 L10.3 3.6" fill="none" stroke="#fff" stroke-width="1.9"/></svg>
<div class="t" style="left:81.60000000000002px;top:292.8px;font-size:9.6px;color:#444">modified_by</div>
<div class="abs" style="left:361px;top:34px;width:198px;height:30px;background:#5581f8;border-radius:3px 3px 0 0;box-shadow:0 0 4px rgba(0,0,0,0.12)"></div>
<div class="t" style="left:372px;top:40.7px;font-size:14.1px;color:#fff">mstockmanager_product</div>
<svg class="abs" style="left:531.8px;top:40.4px" width="12.4" height="14" viewBox="0 0 448 512"><path fill="#e6ebfb" d="M135.2 17.7L128 32H32C14.3 32 0 46.3 0 64S14.3 96 32 96H416c17.7 0 32-14.3 32-32s-14.3-32-32-32H320l-7.2-14.3C307.4 6.8 296.3 0 284.2 0H163.8c-12.1 0-23.2 6.8-28.6 17.7zM416 128H32L53.2 467c1.6 25.3 22.6 45 47.9 45H346.9c25.3 0 46.3-19.7 47.9-45L416 128z"/></svg>
<div class="abs" style="left:361px;top:64px;width:198px;height:19px;background:#fff;border:1px solid #4a76f0"></div>
<div class="abs" style="left:391px;top:64px;width:1px;height:19px;background:#4a76f0"></div>
<svg class="abs" style="left:370px;top:67px" width="13" height="13" viewBox="0 0 13 13"><rect x="0.6" y="0.6" width="11.8" height="11.8" rx="2" fill="#fff" stroke="#767676" stroke-width="1.2"/></svg>
<div class="t" style="left:396.6px;top:67.8px;font-size:9.6px;color:#444">*</div>
<div class="abs" style="left:361px;top:82px;width:198px;height:19px;background:#fff;border:1px solid #4a76f0"></div>
<div class="abs" style="left:391px;top:82px;width:1px;height:19px;background:#4a76f0"></div>
<svg class="abs" style="left:370px;top:85px" width="13" height="13" viewBox="0 0 13 13"><rect x="0.6" y="0.6" width="11.8" height="11.8" rx="2" fill="#fff" stroke="#767676" stroke-width="1.2"/></svg>
<div class="t" style="left:396.6px;top:85.8px;font-size:9.6px;color:#444">product_id</div>
<div class="abs" style="left:361px;top:100px;width:198px;height:19px;background:#fff;border:1px solid #4a76f0"></div>
<div class="abs" style="left:391px;top:100px;width:1px;height:19px;background:#4a76f0"></div>
<svg class="abs" style="left:370px;top:103px" width="13" height="13" viewBox="0 0 13 13"><rect x="0.6" y="0.6" width="11.8" height="11.8" rx="2" fill="#fff" stroke="#767676" stroke-width="1.2"/></svg>
<div class="t" style="left:396.6px;top:103.8px;font-size:9.6px;color:#444">category_id</div>
<div class="abs" style="left:361px;top:118px;width:198px;height:19px;background:#fff;border:1px solid #4a76f0"></div>
<div class="abs" style="left:391px;top:118px;width:1px;height:19px;background:#4a76f0"></div>
<svg class="abs" style="left:370px;top:121px" width="13" height="13" viewBox="0 0 13 13"><rect x="0.6" y="0.6" width="11.8" height="11.8" rx="2" fill="#fff" stroke="#767676" stroke-width="1.2"/></svg>
<div class="t" style="left:396.6px;top:121.8px;font-size:9.6px;color:#444">name</div>
<div class="abs" style="left:361px;top:136px;width:198px;height:19px;background:#fff;border:1px solid #4a76f0"></div>
<div class="abs" style="left:391px;top:136px;width:1px;height:19px;background:#4a76f0"></div>
<svg class="abs" style="left:370px;top:139px" width="13" height="13" viewBox="0 0 13 13"><rect x="0.6" y="0.6" width="11.8" height="11.8" rx="2" fill="#fff" stroke="#767676" stroke-width="1.2"/></svg>
<div class="t" style="left:396.6px;top:139.8px;font-size:9.6px;color:#444">average_value</div>
<div class="abs" style="left:361px;top:154px;width:198px;height:19px;background:#fff;border:1px solid #4a76f0"></div>
<div class="abs" style="left:391px;top:154px;width:1px;height:19px;background:#4a76f0"></div>
<svg class="abs" style="left:370px;top:157px" width="13" height="13" viewBox="0 0 13 13"><rect x="0.6" y="0.6" width="11.8" height="11.8" rx="2" fill="#fff" stroke="#767676" stroke-width="1.2"/></svg>
<div class="t" style="left:396.6px;top:157.8px;font-size:9.6px;color:#444">limit_stock</div>
<div class="abs" style="left:361px;top:172px;width:198px;height:19px;background:#fff;border:1px solid #4a76f0"></div>
<div class="abs" style="left:391px;top:172px;width:1px;height:19px;background:#4a76f0"></div>
<svg class="abs" style="left:370px;top:175px" width="13" height="13" viewBox="0 0 13 13"><rect x="0.6" y="0.6" width="11.8" height="11.8" rx="2" fill="#fff" stroke="#767676" stroke-width="1.2"/></svg>
<div class="t" style="left:396.6px;top:175.8px;font-size:9.6px;color:#444">total_stock</div>
<div class="abs" style="left:361px;top:190px;width:198px;height:19px;background:#fff;border:1px solid #4a76f0"></div>
<div class="abs" style="left:391px;top:190px;width:1px;height:19px;background:#4a76f0"></div>
<svg class="abs" style="left:370px;top:193px" width="13" height="13" viewBox="0 0 13 13"><rect x="0.6" y="0.6" width="11.8" height="11.8" rx="2" fill="#fff" stroke="#767676" stroke-width="1.2"/></svg>
<div class="t" style="left:396.6px;top:193.8px;font-size:9.6px;color:#444">is_active</div>
<div class="abs" style="left:361px;top:208px;width:198px;height:19px;background:#fff;border:1px solid #4a76f0"></div>
<div class="abs" style="left:391px;top:208px;width:1px;height:19px;background:#4a76f0"></div>
<svg class="abs" style="left:370px;top:211px" width="13" height="13" viewBox="0 0 13 13"><rect x="0.6" y="0.6" width="11.8" height="11.8" rx="2" fill="#fff" stroke="#767676" stroke-width="1.2"/></svg>
<div class="t" style="left:396.6px;top:211.8px;font-size:9.6px;color:#444">created_date</div>
<div class="abs" style="left:361px;top:226px;width:198px;height:19px;background:#fff;border:1px solid #4a76f0"></div>
<div class="abs" style="left:391px;top:226px;width:1px;height:19px;background:#4a76f0"></div>
<svg class="abs" style="left:370px;top:229px" width="13" height="13" viewBox="0 0 13 13"><rect x="0.6" y="0.6" width="11.8" height="11.8" rx="2" fill="#fff" stroke="#767676" stroke-width="1.2"/></svg>
<div class="t" style="left:396.6px;top:229.8px;font-size:9.6px;color:#444">created_by</div>
<div class="abs" style="left:361px;top:244px;width:198px;height:19px;background:#fff;border:1px solid #4a76f0"></div>
<div class="abs" style="left:391px;top:244px;width:1px;height:19px;background:#4a76f0"></div>
<svg class="abs" style="left:370px;top:247px" width="13" height="13" viewBox="0 0 13 13"><rect x="0.6" y="0.6" width="11.8" height="11.8" rx="2" fill="#fff" stroke="#767676" stroke-width="1.2"/></svg>
<div class="t" style="left:396.6px;top:247.8px;font-size:9.6px;color:#444">modified_date</div>
<div class="abs" style="left:361px;top:262px;width:198px;height:19px;background:#fff;border:1px solid #4a76f0"></div>
<div class="abs" style="left:391px;top:262px;width:1px;height:19px;background:#4a76f0"></div>
<svg class="abs" style="left:370px;top:265px" width="13" height="13" viewBox="0 0 13 13"><rect x="0.6" y="0.6" width="11.8" height="11.8" rx="2" fill="#fff" stroke="#767676" stroke-width="1.2"/></svg>
<div class="t" style="left:396.6px;top:265.8px;font-size:9.6px;color:#444">modified_by</div>
<div class="abs" style="left:449.9px;top:265.5px;width:27px;height:27px;border-radius:50%;background:#4f7cf6"></div>
<div class="abs" style="left:134.5px;top:293.5px;width:27px;height:27px;border-radius:50%;background:#4f7cf6"></div>
</div>
<div class="abs" style="left:1895px;top:522px;width:6px;height:210px;border-radius:3px;background:#838aa0"></div>
<div class="abs" style="left:453px;top:511px;width:1440px;height:271px;overflow:hidden">
<div class="t" style="left:434.5px;width:120px;text-align:center;top:13px;font-size:10.1px;color:#333">Table</div>
<div class="t" style="left:649.5px;width:120px;text-align:center;top:13px;font-size:10.1px;color:#333">Column</div>
<div class="t" style="left:864.5px;width:120px;text-align:center;top:13px;font-size:10.1px;color:#333">Name</div>
<svg class="abs" style="left:1034px;top:11px" width="14" height="14" viewBox="0 0 14 14"><rect x="0" y="0" width="14" height="14" rx="2" fill="#333"/><path d="M7 3.2 V10.8 M3.2 7 H10.8" stroke="#fff" stroke-width="2"/></svg>
<div class="abs" style="left:602px;top:10px;width:1px;height:270px;background:#ececec"></div>
<div class="abs" style="left:817px;top:10px;width:1px;height:270px;background:#ececec"></div>
<div class="abs" style="left:388px;top:29px;width:644px;height:1px;background:#cfcfcf"></div>
<div class="abs" style="left:394px;top:32px;width:183px;height:20px;overflow:hidden"><div class="t" style="left:0;top:1px;font-size:15.6px;color:#222">mstockmanager_entry_order_product</div></div>
<svg class="abs" style="left:583px;top:34.6px" width="15" height="15" viewBox="0 0 15 15"><circle cx="6.2" cy="6.2" r="4.6" fill="none" stroke="#333" stroke-width="2"/><path d="M9.6 9.6 L13.6 13.6" stroke="#333" stroke-width="2.4" stroke-linecap="round"/></svg>
<div class="t" style="left:609px;top:33px;font-size:15.6px;color:#222">entry_order_product_id</div>
<svg class="abs" style="left:798px;top:34.6px" width="15" height="15" viewBox="0 0 15 15"><circle cx="6.2" cy="6.2" r="4.6" fill="none" stroke="#333" stroke-width="2"/><path d="M9.6 9.6 L13.6 13.6" stroke="#333" stroke-width="2.4" stroke-linecap="round"/></svg>
<svg class="abs" style="left:1034px;top:34px" width="13" height="15" viewBox="0 0 448 512"><path fill="#333" d="M135.2 17.7L128 32H32C14.3 32 0 46.3 0 64S14.3 96 32 96H416c17.7 0 32-14.3 32-32s-14.3-32-32-32H320l-7.2-14.3C307.4 6.8 296.3 0 284.2 0H163.8c-12.1 0-23.2 6.8-28.6 17.7zM416 128H32L53.2 467c1.6 25.3 22.6 45 47.9 45H346.9c25.3 0 46.3-19.7 47.9-45L416 128z"/></svg>
<div class="abs" style="left:388px;top:54px;width:644px;height:1px;background:#cfcfcf"></div>
<div class="abs" style="left:394px;top:57px;width:183px;height:20px;overflow:hidden"><div class="t" style="left:0;top:1px;font-size:15.6px;color:#222">mstockmanager_entry_order_product</div></div>
<svg class="abs" style="left:583px;top:59.6px" width="15" height="15" viewBox="0 0 15 15"><circle cx="6.2" cy="6.2" r="4.6" fill="none" stroke="#333" stroke-width="2"/><path d="M9.6 9.6 L13.6 13.6" stroke="#333" stroke-width="2.4" stroke-linecap="round"/></svg>
<div class="t" style="left:609px;top:58px;font-size:15.6px;color:#222">entry_order_id</div>
<svg class="abs" style="left:798px;top:59.6px" width="15" height="15" viewBox="0 0 15 15"><circle cx="6.2" cy="6.2" r="4.6" fill="none" stroke="#333" stroke-width="2"/><path d="M9.6 9.6 L13.6 13.6" stroke="#333" stroke-width="2.4" stroke-linecap="round"/></svg>
<svg class="abs" style="left:1034px;top:59px" width="13" height="15" viewBox="0 0 448 512"><path fill="#333" d="M135.2 17.7L128 32H32C14.3 32 0 46.3 0 64S14.3 96 32 96H416c17.7 0 32-14.3 32-32s-14.3-32-32-32H320l-7.2-14.3C307.4 6.8 296.3 0 284.2 0H163.8c-12.1 0-23.2 6.8-28.6 17.7zM416 128H32L53.2 467c1.6 25.3 22.6 45 47.9 45H346.9c25.3 0 46.3-19.7 47.9-45L416 128z"/></svg>
<div class="abs" style="left:388px;top:79px;width:644px;height:1px;background:#cfcfcf"></div>
<div class="abs" style="left:394px;top:82px;width:183px;height:20px;overflow:hidden"><div class="t" style="left:0;top:1px;font-size:15.6px;color:#222">mstockmanager_entry_order_product</div></div>
<svg class="abs" style="left:583px;top:84.6px" width="15" height="15" viewBox="0 0 15 15"><circle cx="6.2" cy="6.2" r="4.6" fill="none" stroke="#333" stroke-width="2"/><path d="M9.6 9.6 L13.6 13.6" stroke="#333" stroke-width="2.4" stroke-linecap="round"/></svg>
<div class="t" style="left:609px;top:83px;font-size:15.6px;color:#222">product_id</div>
<svg class="abs" style="left:798px;top:84.6px" width="15" height="15" viewBox="0 0 15 15"><circle cx="6.2" cy="6.2" r="4.6" fill="none" stroke="#333" stroke-width="2"/><path d="M9.6 9.6 L13.6 13.6" stroke="#333" stroke-width="2.4" stroke-linecap="round"/></svg>
<svg class="abs" style="left:1034px;top:84px" width="13" height="15" viewBox="0 0 448 512"><path fill="#333" d="M135.2 17.7L128 32H32C14.3 32 0 46.3 0 64S14.3 96 32 96H416c17.7 0 32-14.3 32-32s-14.3-32-32-32H320l-7.2-14.3C307.4 6.8 296.3 0 284.2 0H163.8c-12.1 0-23.2 6.8-28.6 17.7zM416 128H32L53.2 467c1.6 25.3 22.6 45 47.9 45H346.9c25.3 0 46.3-19.7 47.9-45L416 128z"/></svg>
<div class="abs" style="left:388px;top:104px;width:644px;height:1px;background:#cfcfcf"></div>
<div class="abs" style="left:394px;top:107px;width:183px;height:20px;overflow:hidden"><div class="t" style="left:0;top:1px;font-size:15.6px;color:#222">mstockmanager_entry_order_product</div></div>
<svg class="abs" style="left:583px;top:109.6px" width="15" height="15" viewBox="0 0 15 15"><circle cx="6.2" cy="6.2" r="4.6" fill="none" stroke="#333" stroke-width="2"/><path d="M9.6 9.6 L13.6 13.6" stroke="#333" stroke-width="2.4" stroke-linecap="round"/></svg>
<div class="t" style="left:609px;top:108px;font-size:15.6px;color:#222">group_id</div>
<svg class="abs" style="left:798px;top:109.6px" width="15" height="15" viewBox="0 0 15 15"><circle cx="6.2" cy="6.2" r="4.6" fill="none" stroke="#333" stroke-width="2"/><path d="M9.6 9.6 L13.6 13.6" stroke="#333" stroke-width="2.4" stroke-linecap="round"/></svg>
<svg class="abs" style="left:1034px;top:109px" width="13" height="15" viewBox="0 0 448 512"><path fill="#333" d="M135.2 17.7L128 32H32C14.3 32 0 46.3 0 64S14.3 96 32 96H416c17.7 0 32-14.3 32-32s-14.3-32-32-32H320l-7.2-14.3C307.4 6.8 296.3 0 284.2 0H163.8c-12.1 0-23.2 6.8-28.6 17.7zM416 128H32L53.2 467c1.6 25.3 22.6 45 47.9 45H346.9c25.3 0 46.3-19.7 47.9-45L416 128z"/></svg>
<div class="abs" style="left:388px;top:129px;width:644px;height:1px;background:#cfcfcf"></div>
<div class="abs" style="left:394px;top:132px;width:183px;height:20px;overflow:hidden"><div class="t" style="left:0;top:1px;font-size:15.6px;color:#222">mstockmanager_entry_order_product</div></div>
<svg class="abs" style="left:583px;top:134.6px" width="15" height="15" viewBox="0 0 15 15"><circle cx="6.2" cy="6.2" r="4.6" fill="none" stroke="#333" stroke-width="2"/><path d="M9.6 9.6 L13.6 13.6" stroke="#333" stroke-width="2.4" stroke-linecap="round"/></svg>
<div class="t" style="left:609px;top:133px;font-size:15.6px;color:#222">category_id</div>
<svg class="abs" style="left:798px;top:134.6px" width="15" height="15" viewBox="0 0 15 15"><circle cx="6.2" cy="6.2" r="4.6" fill="none" stroke="#333" stroke-width="2"/><path d="M9.6 9.6 L13.6 13.6" stroke="#333" stroke-width="2.4" stroke-linecap="round"/></svg>
<svg class="abs" style="left:1034px;top:134px" width="13" height="15" viewBox="0 0 448 512"><path fill="#333" d="M135.2 17.7L128 32H32C14.3 32 0 46.3 0 64S14.3 96 32 96H416c17.7 0 32-14.3 32-32s-14.3-32-32-32H320l-7.2-14.3C307.4 6.8 296.3 0 284.2 0H163.8c-12.1 0-23.2 6.8-28.6 17.7zM416 128H32L53.2 467c1.6 25.3 22.6 45 47.9 45H346.9c25.3 0 46.3-19.7 47.9-45L416 128z"/></svg>
<div class="abs" style="left:388px;top:154px;width:644px;height:1px;background:#cfcfcf"></div>
<div class="abs" style="left:394px;top:157px;width:183px;height:20px;overflow:hidden"><div class="t" style="left:0;top:1px;font-size:15.6px;color:#222">mstockmanager_entry_order_product</div></div>
<svg class="abs" style="left:583px;top:159.6px" width="15" height="15" viewBox="0 0 15 15"><circle cx="6.2" cy="6.2" r="4.6" fill="none" stroke="#333" stroke-width="2"/><path d="M9.6 9.6 L13.6 13.6" stroke="#333" stroke-width="2.4" stroke-linecap="round"/></svg>
<div class="t" style="left:609px;top:158px;font-size:15.6px;color:#222">batch_id</div>
<svg class="abs" style="left:798px;top:159.6px" width="15" height="15" viewBox="0 0 15 15"><circle cx="6.2" cy="6.2" r="4.6" fill="none" stroke="#333" stroke-width="2"/><path d="M9.6 9.6 L13.6 13.6" stroke="#333" stroke-width="2.4" stroke-linecap="round"/></svg>
<svg class="abs" style="left:1034px;top:159px" width="13" height="15" viewBox="0 0 448 512"><path fill="#333" d="M135.2 17.7L128 32H32C14.3 32 0 46.3 0 64S14.3 96 32 96H416c17.7 0 32-14.3 32-32s-14.3-32-32-32H320l-7.2-14.3C307.4 6.8 296.3 0 284.2 0H163.8c-12.1 0-23.2 6.8-28.6 17.7zM416 128H32L53.2 467c1.6 25.3 22.6 45 47.9 45H346.9c25.3 0 46.3-19.7 47.9-45L416 128z"/></svg>
<div class="abs" style="left:388px;top:179px;width:644px;height:1px;background:#cfcfcf"></div>
<div class="abs" style="left:394px;top:182px;width:183px;height:20px;overflow:hidden"><div class="t" style="left:0;top:1px;font-size:15.6px;color:#222">mstockmanager_entry_order_product</div></div>
<svg class="abs" style="left:583px;top:184.6px" width="15" height="15" viewBox="0 0 15 15"><circle cx="6.2" cy="6.2" r="4.6" fill="none" stroke="#333" stroke-width="2"/><path d="M9.6 9.6 L13.6 13.6" stroke="#333" stroke-width="2.4" stroke-linecap="round"/></svg>
<div class="t" style="left:609px;top:183px;font-size:15.6px;color:#222">quantity</div>
<svg class="abs" style="left:798px;top:184.6px" width="15" height="15" viewBox="0 0 15 15"><circle cx="6.2" cy="6.2" r="4.6" fill="none" stroke="#333" stroke-width="2"/><path d="M9.6 9.6 L13.6 13.6" stroke="#333" stroke-width="2.4" stroke-linecap="round"/></svg>
<svg class="abs" style="left:1034px;top:184px" width="13" height="15" viewBox="0 0 448 512"><path fill="#333" d="M135.2 17.7L128 32H32C14.3 32 0 46.3 0 64S14.3 96 32 96H416c17.7 0 32-14.3 32-32s-14.3-32-32-32H320l-7.2-14.3C307.4 6.8 296.3 0 284.2 0H163.8c-12.1 0-23.2 6.8-28.6 17.7zM416 128H32L53.2 467c1.6 25.3 22.6 45 47.9 45H346.9c25.3 0 46.3-19.7 47.9-45L416 128z"/></svg>
<div class="abs" style="left:388px;top:204px;width:644px;height:1px;background:#cfcfcf"></div>
<div class="abs" style="left:394px;top:207px;width:183px;height:20px;overflow:hidden"><div class="t" style="left:0;top:1px;font-size:15.6px;color:#222">mstockmanager_entry_order_product</div></div>
<svg class="abs" style="left:583px;top:209.6px" width="15" height="15" viewBox="0 0 15 15"><circle cx="6.2" cy="6.2" r="4.6" fill="none" stroke="#333" stroke-width="2"/><path d="M9.6 9.6 L13.6 13.6" stroke="#333" stroke-width="2.4" stroke-linecap="round"/></svg>
<div class="t" style="left:609px;top:208px;font-size:15.6px;color:#222">is_active</div>
<svg class="abs" style="left:798px;top:209.6px" width="15" height="15" viewBox="0 0 15 15"><circle cx="6.2" cy="6.2" r="4.6" fill="none" stroke="#333" stroke-width="2"/><path d="M9.6 9.6 L13.6 13.6" stroke="#333" stroke-width="2.4" stroke-linecap="round"/></svg>
<svg class="abs" style="left:1034px;top:209px" width="13" height="15" viewBox="0 0 448 512"><path fill="#333" d="M135.2 17.7L128 32H32C14.3 32 0 46.3 0 64S14.3 96 32 96H416c17.7 0 32-14.3 32-32s-14.3-32-32-32H320l-7.2-14.3C307.4 6.8 296.3 0 284.2 0H163.8c-12.1 0-23.2 6.8-28.6 17.7zM416 128H32L53.2 467c1.6 25.3 22.6 45 47.9 45H346.9c25.3 0 46.3-19.7 47.9-45L416 128z"/></svg>
<div class="abs" style="left:388px;top:229px;width:644px;height:1px;background:#cfcfcf"></div>
<div class="abs" style="left:394px;top:232px;width:183px;height:20px;overflow:hidden"><div class="t" style="left:0;top:1px;font-size:15.6px;color:#222">mstockmanager_entry_order_product</div></div>
<svg class="abs" style="left:583px;top:234.6px" width="15" height="15" viewBox="0 0 15 15"><circle cx="6.2" cy="6.2" r="4.6" fill="none" stroke="#333" stroke-width="2"/><path d="M9.6 9.6 L13.6 13.6" stroke="#333" stroke-width="2.4" stroke-linecap="round"/></svg>
<div class="t" style="left:609px;top:233px;font-size:15.6px;color:#222">created_date</div>
<svg class="abs" style="left:798px;top:234.6px" width="15" height="15" viewBox="0 0 15 15"><circle cx="6.2" cy="6.2" r="4.6" fill="none" stroke="#333" stroke-width="2"/><path d="M9.6 9.6 L13.6 13.6" stroke="#333" stroke-width="2.4" stroke-linecap="round"/></svg>
<svg class="abs" style="left:1034px;top:234px" width="13" height="15" viewBox="0 0 448 512"><path fill="#333" d="M135.2 17.7L128 32H32C14.3 32 0 46.3 0 64S14.3 96 32 96H416c17.7 0 32-14.3 32-32s-14.3-32-32-32H320l-7.2-14.3C307.4 6.8 296.3 0 284.2 0H163.8c-12.1 0-23.2 6.8-28.6 17.7zM416 128H32L53.2 467c1.6 25.3 22.6 45 47.9 45H346.9c25.3 0 46.3-19.7 47.9-45L416 128z"/></svg>
<div class="abs" style="left:388px;top:254px;width:644px;height:1px;background:#cfcfcf"></div>
<div class="abs" style="left:394px;top:257px;width:183px;height:20px;overflow:hidden"><div class="t" style="left:0;top:1px;font-size:15.6px;color:#222">mstockmanager_entry_order_product</div></div>
<svg class="abs" style="left:583px;top:259.6px" width="15" height="15" viewBox="0 0 15 15"><circle cx="6.2" cy="6.2" r="4.6" fill="none" stroke="#333" stroke-width="2"/><path d="M9.6 9.6 L13.6 13.6" stroke="#333" stroke-width="2.4" stroke-linecap="round"/></svg>
<div class="t" style="left:609px;top:258px;font-size:15.6px;color:#222">created_by</div>
<svg class="abs" style="left:798px;top:259.6px" width="15" height="15" viewBox="0 0 15 15"><circle cx="6.2" cy="6.2" r="4.6" fill="none" stroke="#333" stroke-width="2"/><path d="M9.6 9.6 L13.6 13.6" stroke="#333" stroke-width="2.4" stroke-linecap="round"/></svg>
<svg class="abs" style="left:1034px;top:259px" width="13" height="15" viewBox="0 0 448 512"><path fill="#333" d="M135.2 17.7L128 32H32C14.3 32 0 46.3 0 64S14.3 96 32 96H416c17.7 0 32-14.3 32-32s-14.3-32-32-32H320l-7.2-14.3C307.4 6.8 296.3 0 284.2 0H163.8c-12.1 0-23.2 6.8-28.6 17.7zM416 128H32L53.2 467c1.6 25.3 22.6 45 47.9 45H346.9c25.3 0 46.3-19.7 47.9-45L416 128z"/></svg>
<div class="abs" style="left:388px;top:279px;width:644px;height:1px;background:#cfcfcf"></div>
</div>
<div class="abs" style="left:456px;top:785px;width:1444px;height:1px;background:#cfcfcf"></div>
<div class="abs" style="left:459.7px;top:786px;width:91.80000000000001px;height:33px;background:#fff;border:1px solid #c5c5c5;border-top:none;border-radius:0 0 3px 3px"></div>
<div class="t" style="left:473.7px;top:793.2px;font-size:15px;color:#222">Attributes</div>
<div class="abs" style="left:555px;top:787px;width:58.39999999999998px;height:32px;background:linear-gradient(#ececec 0%,#eaeaea 45%,#e2e2e2 58%,#e5e5e5 100%);border:1px solid #c5c5c5;border-top-color:#e6e6e6;border-radius:0 0 4px 4px"></div>
<div class="t" style="left:569px;top:794.4px;font-size:15px;color:#555a60">Keys</div>
<div class="abs" style="left:617.6px;top:787px;width:98.79999999999995px;height:32px;background:linear-gradient(#ececec 0%,#eaeaea 45%,#e2e2e2 58%,#e5e5e5 100%);border:1px solid #c5c5c5;border-top-color:#e6e6e6;border-radius:0 0 4px 4px"></div>
<div class="t" style="left:631.2px;top:794.4px;font-size:15px;color:#555a60">Conditions</div>
<div class="abs" style="left:720.3px;top:787px;width:88.0px;height:32px;background:linear-gradient(#ececec 0%,#eaeaea 45%,#e2e2e2 58%,#e5e5e5 100%);border:1px solid #c5c5c5;border-top-color:#e6e6e6;border-radius:0 0 4px 4px"></div>
<div class="t" style="left:733.9px;top:794.4px;font-size:15px;color:#555a60">Group By</div>
<div class="abs" style="left:812.5px;top:787px;width:75.10000000000002px;height:32px;background:linear-gradient(#ececec 0%,#eaeaea 45%,#e2e2e2 58%,#e5e5e5 100%);border:1px solid #c5c5c5;border-top-color:#e6e6e6;border-radius:0 0 4px 4px"></div>
<div class="t" style="left:825.7px;top:794.4px;font-size:15px;color:#555a60">Sorting</div>
<div class="abs" style="left:890.4px;top:787px;width:97.10000000000002px;height:32px;background:linear-gradient(#ececec 0%,#eaeaea 45%,#e2e2e2 58%,#e5e5e5 100%);border:1px solid #c5c5c5;border-top-color:#e6e6e6;border-radius:0 0 4px 4px"></div>
<div class="t" style="left:904px;top:794.4px;font-size:15px;color:#555a60">Limit/Start</div>
<svg class="abs" style="left:1743px;top:799px" width="12" height="11" viewBox="0 0 576 512"><path fill="#666" d="M288 32c-80.8 0-145.5 36.8-192.6 80.6C48.6 156 17.3 208 2.5 243.7c-3.3 7.9-3.3 16.7 0 24.6C17.3 304 48.6 356 95.4 399.4C142.5 443.2 207.2 480 288 480s145.5-36.8 192.6-80.6c46.8-43.5 78.1-95.4 93-131.1c3.3-7.9 3.3-16.7 0-24.6c-14.9-35.7-46.2-87.7-93-131.1C433.5 68.8 368.8 32 288 32zM144 256a144 144 0 1 1 288 0 144 144 0 1 1 -288 0zm144-64c0 35.3-28.7 64-64 64c-7.1 0-13.9-1.2-20.3-3.3c-5.5-1.8-11.9 1.6-11.7 7.4c.3 6.9 1.3 13.8 3.2 20.7c13.7 51.2 66.4 81.6 117.6 67.9s81.6-66.4 67.9-117.6c-11.1-41.5-47.8-69.4-88.6-71.1c-5.8-.2-9.2 6.1-7.4 11.7c2.1 6.4 3.3 13.2 3.3 20.3z"/></svg>
<div class="t" style="left:1758.8px;top:799px;font-size:11.4px;color:#666">Toggle Advanced Settings</div>
<div class="abs" style="left:437px;top:835px;width:1481px;height:5px;background:#fafbfe;border-top:1px solid #c9cde0;border-bottom:1px solid #c9cde0"></div>
<div class="abs" style="left:437px;top:840px;width:1481px;height:30px;background:#f7f8fc"></div>
<div class="abs" style="left:1161px;top:835px;width:34px;height:5px;background:#b8c3d1;border-top:1px solid #8a9298"></div>
<svg class="abs" style="left:1173px;top:836px" width="10" height="4" viewBox="0 0 10 4"><path d="M0.5 4 L5 0.3 L9.5 4Z" fill="#fff"/></svg>
<div class="t" style="left:447.5px;top:848px;font-size:14.6px;color:#555">Main Settings</div>
<div class="abs" style="left:0;top:870px;width:1918px;height:2px;background:#231c22"></div>
<div class="abs" style="left:1879px;top:830px;width:30px;height:30px;border-radius:50%;background:#4775f2"></div>
<div class="t" style="left:1879px;top:834.5px;width:30px;text-align:center;font-size:20px;font-weight:700;color:#fff">?</div>
</body></html>
